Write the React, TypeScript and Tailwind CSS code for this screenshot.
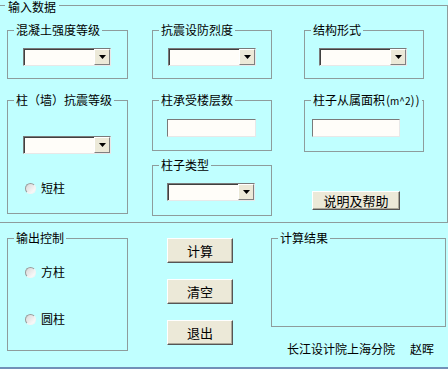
import React from "react";

const FONT = { fontFamily: '"Noto Sans CJK SC", "DejaVu Sans", sans-serif' };

function Group({ label, className, children }: { label: React.ReactNode; className: string; children?: React.ReactNode }) {
    return (
        <div className={"relative border border-[#8e9c9c] " + className}>
            <span className="absolute -top-[8px] left-[6px] bg-[#c0ffff] px-[2px] text-[12px] leading-[14px] text-black whitespace-nowrap">
                {label}
            </span>
            {children}
        </div>
    );
}

function Combo() {
    return (
        <div className="flex h-[18px] w-[88px] border border-t-[#7a7a7a] border-l-[#7a7a7a] border-r-[#e8e8e8] border-b-[#e8e8e8] bg-[#fffdf9]">
            <div className="flex-1 border-t border-l border-[#404040]" />
            <div className="flex w-[16px] items-center justify-center border border-t-white border-l-white border-r-[#808080] border-b-[#808080] bg-[#ece9d8]">
                <svg width="7" height="4" viewBox="0 0 7 4">
                    <polygon points="0,0 7,0 3.5,4" fill="#000" />
                </svg>
            </div>
        </div>
    );
}

function Field({ w }: { w: string }) {
    return <div className={"h-[18px] border border-t-[#7a7a7a] border-l-[#7a7a7a] border-r-[#e8e8e8] border-b-[#e8e8e8] bg-[#fffdf9] " + w} />;
}

function Radio({ text }: { text: string }) {
    return (
        <div className="flex h-[14px] items-center gap-[5px]">
            <span className="h-[11px] w-[11px] rounded-full border border-t-[#9a9a9a] border-l-[#9a9a9a] border-r-[#f4f4f4] border-b-[#f4f4f4] bg-gradient-to-br from-[#d8d8d8] to-white" />
            <span className="text-[12px] leading-[14px] text-black">{text}</span>
        </div>
    );
}

function Btn({ text, className }: { text: string; className: string }) {
    return (
        <button className={"flex items-center justify-center border border-t-white border-l-white border-r-[#555] border-b-[#555] bg-[#ece9d8] text-[13px] leading-none text-black shadow-[inset_-1px_-1px_0_#aca899] " + className}>
            {text}
        </button>
    );
}

export default function App() {
    return (
        <div className="flex h-[369px] w-[448px] flex-col overflow-hidden bg-[#c0ffff]" style={FONT}>
            {/* 输入数据 */}
            <div className="relative mt-[5px] flex h-[218px] w-[448px] border border-l-0 border-[#8e9c9c] pl-[7px] pt-[24px]">
                <span className="absolute -top-[6px] left-[5px] bg-[#c0ffff] px-[3px] text-[12px] leading-[14px] text-black">输入数据</span>

                <div className="flex w-[121px] flex-col">
                    <Group label="混凝土强度等级" className="h-[49px] pl-[15px] pt-[17px]">
                        <Combo />
                    </Group>
                    <Group label="柱（墙）抗震等级" className="mt-[21px] h-[114px] pl-[15px] pt-[35px]">
                        <Combo />
                        <div className="ml-[2px] mt-[27px]">
                            <Radio text="短柱" />
                        </div>
                    </Group>
                </div>

                <div className="ml-[24px] flex w-[120px] flex-col">
                    <Group label="抗震设防烈度" className="h-[49px] pl-[15px] pt-[17px]">
                        <Combo />
                    </Group>
                    <Group label="柱承受楼层数" className="mt-[21px] h-[51px] pl-[14px] pt-[18px]">
                        <Field w="w-[89px]" />
                    </Group>
                    <Group label="柱子类型" className="mt-[14px] h-[51px] pl-[14px] pt-[17px]">
                        <Combo />
                    </Group>
                </div>

                <div className="ml-[32px] flex w-[120px] flex-col">
                    <Group label="结构形式" className="h-[49px] pl-[14px] pt-[17px]">
                        <Combo />
                    </Group>
                    <Group
                        label={
                            <>
                                柱子从属面积<span className="ml-[1px]">(</span>
                                <span className="text-[10px]">m^2</span>
                                <span>)</span>
                                <span className="ml-[1px]">)</span>
                            </>
                        }
                        className="mt-[21px] h-[52px] pl-[7px] pt-[18px]"
                    >
                        <Field w="w-[88px]" />
                    </Group>
                    <Btn text="说明及帮助" className="ml-[8px] mt-[39px] h-[19px] w-[88px]" />
                </div>
            </div>

            {/* 下部 */}
            <div className="mt-[15px] flex pl-[7px]">
                <Group label="输出控制" className="flex h-[113px] w-[121px] flex-col pl-[17px] pt-[26px]">
                    <Radio text="方柱" />
                    <div className="mt-[33px]">
                        <Radio text="圆柱" />
                    </div>
                </Group>

                <div className="ml-[39px] flex flex-col gap-[16px]">
                    <Btn text="计算" className="h-[25px] w-[66px]" />
                    <Btn text="清空" className="h-[25px] w-[66px]" />
                    <Btn text="退出" className="h-[25px] w-[66px]" />
                </div>

                <div className="ml-[38px] flex flex-col">
                    <Group label="计算结果" className="h-[89px] w-[175px]" />
                    <div className="mt-[15px] pl-[16px] text-[12px] leading-[14px] text-black whitespace-nowrap">
                        <span>长江设计院上海分院</span>
                        <span className="ml-[15px]">赵晖</span>
                    </div>
                </div>
            </div>

            <div className="mt-auto h-[2px] bg-[#7090b8]" />
        </div>
    );
}
